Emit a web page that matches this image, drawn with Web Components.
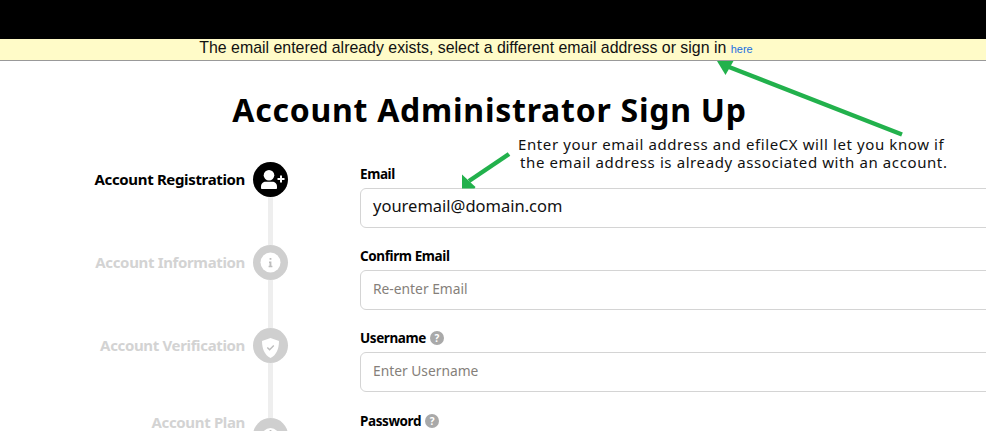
<!DOCTYPE html>
<html lang="en">
<head>
<meta charset="utf-8">
<title>Account Administrator Sign Up</title>
<style>
html, body { margin: 0; background: #fff; }
body { font-family: "Noto Sans", sans-serif; }
</style>
</head>
<body>
<signup-page>
  <alert-banner>The email entered already exists, select a different email address or sign in <a slot="link" href="#">here</a></alert-banner>
  <step-item state="active" icon="user-plus">Account Registration</step-item>
  <step-item icon="info">Account Information</step-item>
  <step-item icon="shield">Account Verification</step-item>
  <step-item icon="plan" last>Account Plan</step-item>
  <form-field slot="form" label="Email" filled>youremail@domain.com</form-field>
  <form-field slot="form" label="Confirm Email">Re-enter Email</form-field>
  <form-field slot="form" label="Username" help>Enter Username</form-field>
  <form-field slot="form" label="Password" help></form-field>
</signup-page>
<script>
const icons = {
  "user-plus": `<svg viewBox="0 0 35 35" width="35" height="35" fill="#fff"><circle cx="16" cy="13.200" r="5.300"/><path d="M8 26v-1.500c0-2.800 2.200-4.700 4.800-4.700h6.400c2.600 0 4.800 1.900 4.800 4.700V26c0 .6-.5 1-1.100 1H9.100C8.500 27 8 26.600 8 26z"/><path d="M27 13.500h2v2.500h2.500v2H29v2.500h-2V18h-2.500v-2H27z"/></svg>`,
  info: `<svg viewBox="0 0 35 35" width="35" height="35"><circle cx="17.500" cy="17.500" r="10" fill="#fff"/><path d="M16 16.500h2.400v4.300h1v1.400h-3.800v-1.400h.9v-2.900H16zM16.600 13h1.800v1.800h-1.800z" fill="#bdbdbd"/></svg>`,
  shield: `<svg viewBox="0 0 35 35" width="35" height="35"><path d="M17.500 10l8.500 3c0 7.500-2.500 14-8.500 17-6-3-8.500-9.500-8.500-17z" fill="#fff"/><path d="M14.300 19.500l2.300 2.300 4.200-4.300" fill="none" stroke="#bdbdbd" stroke-width="1.400"/></svg>`,
  plan: `<svg viewBox="0 0 35 35" width="35" height="35"><circle cx="17.500" cy="19" r="9" fill="#fff"/><rect x="16.600" y="12" width="1.800" height="1.800" fill="#bdbdbd"/></svg>`
};

const pageTemplate = document.createElement("template");
pageTemplate.innerHTML = `\
<style>
:host { display: block; height: 431px; overflow: hidden; position: relative; }
.topbar { height: 39px; background: #000; }
h1 {
  margin: 0;
  padding: 26px 7px 0 0;
  height: 101px;
  box-sizing: border-box;
  text-align: center;
  font: 700 32px/45px "Noto Sans", sans-serif;
  letter-spacing: 0.75px;
  color: #000;
}
.body { display: flex; }
.steps { width: 288px; flex: none; display: flex; flex-direction: column; }
.form { width: 640px; margin-left: 72px; flex: none; }
.note {
  position: absolute;
  left: 518px;
  top: 135px;
  font: 15px/18px "Noto Sans", sans-serif;
  letter-spacing: 0.6px;
  color: #111;
  white-space: nowrap;
}
.note span { display: block; }
.note span + span { padding-left: 2px; }
svg.arrows { position: absolute; left: 0; top: 0; pointer-events: none; }
</style>
<div class="topbar"></div>
<slot name="banner"></slot>
<h1>Account Administrator Sign Up</h1>
<div class="body">
  <div class="steps"><slot></slot></div>
  <div class="form"><slot name="form"></slot></div>
</div>
<div class="note"><span>Enter your email address and efileCX will let you know if</span><span>the email address is already associated with an account.</span></div>
<svg class="arrows" width="986" height="431">
  <g fill="none" stroke="#22b14c" stroke-width="4.500">
    <path d="M902 134.500L729 67"/>
    <path d="M509 154L469 181"/>
  </g>
  <path d="M717 61h16.500l-8 14z" fill="#22b14c"/>
  <path d="M462 174.500l13.500 12.500-1 1.500H462z" fill="#22b14c"/>
</svg>
`;

class SignupPage extends HTMLElement {
  constructor() {
    super();
    this.attachShadow({ mode: "open" });
    this.shadowRoot.appendChild(pageTemplate.content.cloneNode(true));
    // バナーは専用スロットへ
    const banner = this.querySelector("alert-banner");
    if (banner) banner.slot = "banner";
  }
}

const bannerTemplate = document.createElement("template");
bannerTemplate.innerHTML = `\
<style>
:host {
  display: block;
  height: 22px;
  box-sizing: border-box;
  background: #fffbc8;
  border-bottom: 1px solid #999;
  padding-right: 34px;
  text-align: center;
  font: 15.900px/18px "Liberation Sans", Arial, sans-serif;
  color: #111;
  white-space: nowrap;
}
::slotted(a) { font-size: 11px; color: #1a6fe0; text-decoration: none; }
</style>
<slot></slot><slot name="link"></slot>
`;

class AlertBanner extends HTMLElement {
  constructor() {
    super();
    this.attachShadow({ mode: "open" });
    this.shadowRoot.appendChild(bannerTemplate.content.cloneNode(true));
  }
}

const stepTemplate = document.createElement("template");
stepTemplate.innerHTML = `\
<style>
:host {
  display: flex;
  justify-content: flex-end;
  height: 83px;
  font: 700 15px/34px "Noto Sans", sans-serif;
  letter-spacing: -0.35px;
  color: #d3d3d3;
  white-space: nowrap;
}
:host([state="active"]) { color: #000; }
:host([last]) { line-height: 23px; }
.label { padding-right: 8px; }
.rail { width: 35px; display: flex; flex-direction: column; align-items: center; }
.dot { width: 35px; height: 35px; border-radius: 50%; background: #cfcfcf; flex: none; }
:host([state="active"]) .dot { background: #000; }
.line { width: 5px; flex: 1; background: #eee; }
.lead { display: none; width: 5px; height: 7px; flex: none; background: #eee; }
:host([last]) .lead { display: block; }
</style>
<span class="label"><slot></slot></span>
<div class="rail"><div class="lead"></div><div class="dot"></div><div class="line"></div></div>
`;

class StepItem extends HTMLElement {
  constructor() {
    super();
    this.attachShadow({ mode: "open" });
    this.shadowRoot.appendChild(stepTemplate.content.cloneNode(true));
    this.shadowRoot.querySelector(".dot").innerHTML = icons[this.getAttribute("icon")] || "";
  }
}

const fieldTemplate = document.createElement("template");
fieldTemplate.innerHTML = `\
<style>
:host { display: block; height: 82px; font-family: "Noto Sans", sans-serif; }
:host(:nth-of-type(3)) { height: 83px; }
.label {
  display: flex;
  align-items: center;
  gap: 4px;
  height: 24px;
  margin-bottom: 2px;
  font-weight: 700;
  font-size: 13.500px;
  letter-spacing: -0.4px;
  color: #000;
}
.help {
  display: none;
  width: 14px; height: 14px;
  border-radius: 50%;
  background: #a9a9a9;
  color: #fff;
  font-size: 10px;
  line-height: 14px;
  text-align: center;
  letter-spacing: 0;
}
:host([help]) .help { display: block; }
.box {
  height: 40px;
  box-sizing: border-box;
  border: 1px solid #d4d4d4;
  border-radius: 6px;
  padding: 0 12px;
  font-size: 13.800px;
  line-height: 36px;
  color: #857f7a;
  background: #fff;
}
:host([filled]) .box { font-size: 16.500px; line-height: 34px; color: #111; }
</style>
<div class="label"><span id="text"></span><span class="help">?</span></div>
<div class="box"><slot></slot></div>
`;

class FormField extends HTMLElement {
  constructor() {
    super();
    this.attachShadow({ mode: "open" });
    this.shadowRoot.appendChild(fieldTemplate.content.cloneNode(true));
    this.shadowRoot.querySelector("#text").textContent = this.getAttribute("label");
  }
}

customElements.define("signup-page", SignupPage);
customElements.define("alert-banner", AlertBanner);
customElements.define("step-item", StepItem);
customElements.define("form-field", FormField);
</script>
</body>
</html>
